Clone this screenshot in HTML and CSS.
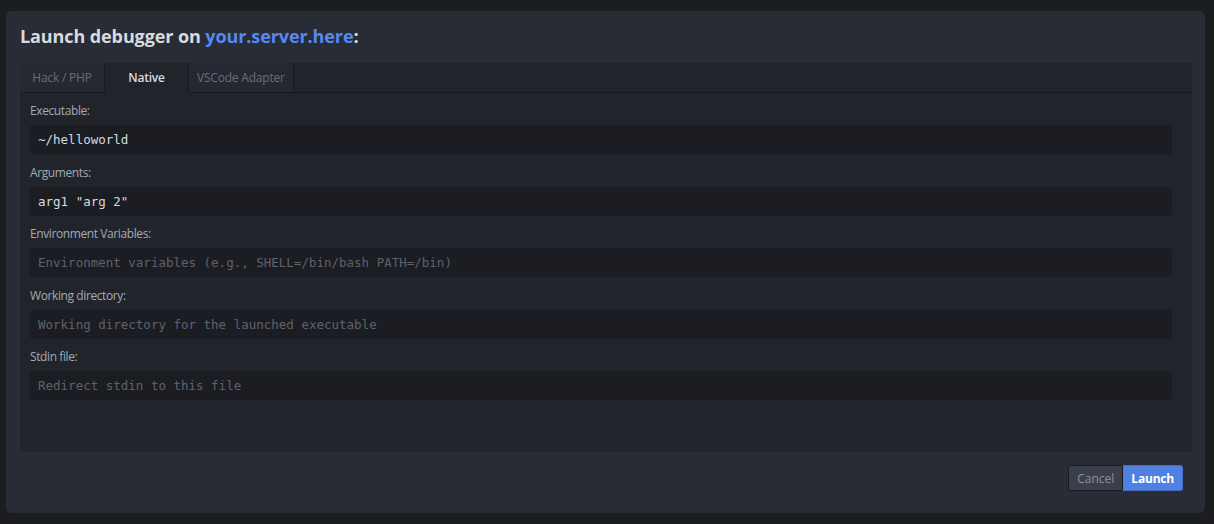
FILE: index.html
```html
<!DOCTYPE html>
<html lang="en">
<head>
  <meta charset="UTF-8" />
  <title>Launch debugger</title>
  <link rel="stylesheet" href="styles.css">
</head>
<body>
  <div class="modal">
    <h1 class="title">Launch debugger on <span class="host">your.server.here</span>:</h1>
    <div class="panel">
      <div class="tabs">
        <div class="tab">Hack / PHP</div>
        <div class="tab active">Native</div>
        <div class="tab">VSCode Adapter</div>
        <div class="tab-fill"></div>
      </div>
      <div class="fields">
        <div class="field">
          <label>Executable:</label>
          <input class="input" type="text" value="~/helloworld">
        </div>
        <div class="field">
          <label>Arguments:</label>
          <input class="input" type="text" value='arg1 "arg 2"'>
        </div>
        <div class="field">
          <label>Environment Variables:</label>
          <input class="input" type="text" placeholder="Environment variables (e.g., SHELL=/bin/bash PATH=/bin)">
        </div>
        <div class="field">
          <label>Working directory:</label>
          <input class="input" type="text" placeholder="Working directory for the launched executable">
        </div>
        <div class="field">
          <label>Stdin file:</label>
          <input class="input" type="text" placeholder="Redirect stdin to this file">
        </div>
      </div>
    </div>
    <div class="footer">
      <div class="btn-group">
        <button class="btn">Cancel</button>
        <button class="btn primary">Launch</button>
      </div>
    </div>
  </div>
</body>
</html>
```

FILE: styles.css
```css
body {
  margin: 0;
  padding: 11px 9px 11px 6px;
  background: #1c1d21;
  font-family: 'Open Sans', 'Noto Sans', sans-serif;
  height: 524px;
  box-sizing: border-box;
  overflow: hidden;
}
.modal {
  background: #282c34;
  border-radius: 5px;
  height: 502px;
  padding: 0 13px 0 14px;
  box-sizing: border-box;
  display: flex;
  flex-direction: column;
}
.title {
  margin: 0;
  height: 52px;
  line-height: 50px;
  font-size: 18px;
  font-weight: 700;
  color: #d7dae0;
  letter-spacing: -0.1px;
}
.host {
  color: #568af2;
}

/* Tabbed panel */
.panel {
  background: #21252b;
  height: 389px;
  display: flex;
  flex-direction: column;
}
.tabs {
  display: flex;
  height: 30px;
}
.tab {
  font-size: 12px;
  line-height: 29px;
  color: #686e79;
  padding: 0 8px;
  letter-spacing: -0.2px;
  border-right: 1px solid #181a1f;
  border-bottom: 1px solid #181a1f;
  background: #252830;
}
.tab:first-child {
  width: 84px;
  padding: 0;
  text-align: center;
}
.tab.active {
  width: 83px;
  padding: 0;
  text-align: center;
  color: #d7dae0;
  font-weight: 600;
  background: #21252b;
  border-bottom-color: transparent;
}
.tab-fill {
  flex: 1;
  border-bottom: 1px solid #181a1f;
}
.fields {
  padding: 10px 20px 0 10px;
  display: flex;
  flex-direction: column;
  gap: 10.5px;
}
.field label {
  display: block;
  font-size: 12px;
  letter-spacing: -0.4px;
  line-height: 16px;
  color: #a3a9b5;
  margin-bottom: 6px;
}
.input {
  display: block;
  width: 100%;
  height: 29px;
  box-sizing: border-box;
  background: #1b1d23;
  border: none;
  border-radius: 3px;
  padding: 0 8px;
  font-family: 'DejaVu Sans Mono', monospace;
  font-size: 12.5px;
  color: #d7dae0;
  outline: none;
}
.input::placeholder {
  color: #5d626c;
}

/* Footer buttons */
.footer {
  display: flex;
  justify-content: flex-end;
  padding: 13px 9px 0 0;
}
.btn-group {
  display: flex;
}
.btn {
  height: 26px;
  font-family: inherit;
  font-size: 12px;
  padding: 0 8px;
  border: 1px solid #181a1f;
  background: #3a3f4b;
  color: #8a909b;
  border-radius: 3px 0 0 3px;
}
.btn.primary {
  background: #5081e2;
  color: #fff;
  font-weight: 700;
  letter-spacing: -0.2px;
  border-color: #466fc4;
  border-left: none;
  border-radius: 0 3px 3px 0;
}
```
